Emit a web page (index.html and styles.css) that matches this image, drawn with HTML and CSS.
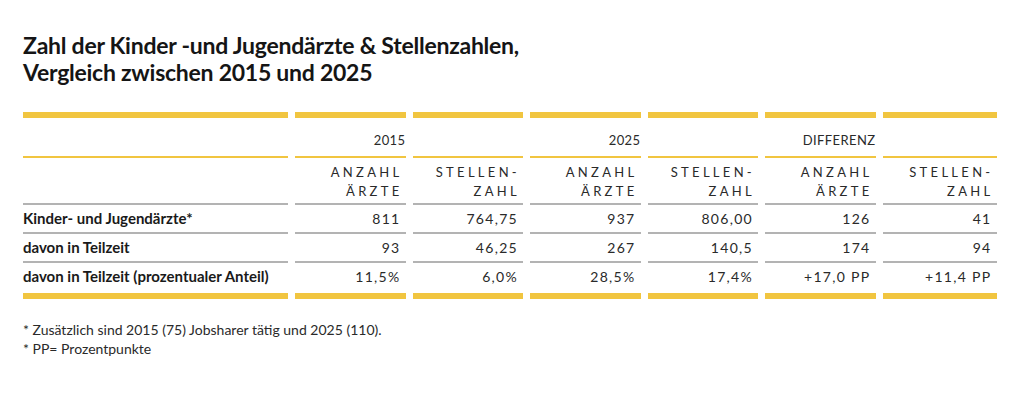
FILE: index.html
```html
<!DOCTYPE html>
<html lang="de">
<head>
<meta charset="utf-8">
<title>Zahl der Kinder- und Jugendärzte</title>
<link rel="stylesheet" href="styles.css">
</head>
<body>
<main class="page">
  <h1 class="title">Zahl der Kinder -und Jugendärzte &amp; Stellenzahlen,<br>Vergleich zwischen 2015 und 2025</h1>
  <div class="table">
    <div class="cell year"></div>
    <div class="cell year">2015</div>
    <div class="cell year"></div>
    <div class="cell year">2025</div>
    <div class="cell year"></div>
    <div class="cell year">DIFFERENZ</div>
    <div class="cell year"></div>

    <div class="cell head"></div>
    <div class="cell head">ANZAHL<br>ÄRZTE</div>
    <div class="cell head">STELLEN-<br>ZAHL</div>
    <div class="cell head">ANZAHL<br>ÄRZTE</div>
    <div class="cell head">STELLEN-<br>ZAHL</div>
    <div class="cell head">ANZAHL<br>ÄRZTE</div>
    <div class="cell head">STELLEN-<br>ZAHL</div>

    <div class="cell label">Kinder- und Jugendärzte*</div>
    <div class="cell num">811</div>
    <div class="cell num">764,75</div>
    <div class="cell num">937</div>
    <div class="cell num">806,00</div>
    <div class="cell num">126</div>
    <div class="cell num">41</div>

    <div class="cell label">davon in Teilzeit</div>
    <div class="cell num">93</div>
    <div class="cell num">46,25</div>
    <div class="cell num">267</div>
    <div class="cell num">140,5</div>
    <div class="cell num">174</div>
    <div class="cell num">94</div>

    <div class="cell label last">davon in Teilzeit (prozentualer Anteil)</div>
    <div class="cell num last">11,5%</div>
    <div class="cell num last">6,0%</div>
    <div class="cell num last">28,5%</div>
    <div class="cell num last">17,4%</div>
    <div class="cell num last">+17,0 PP</div>
    <div class="cell num last">+11,4 PP</div>
  </div>
  <div class="notes">
    <p class="note">* Zusätzlich sind 2015 (75) Jobsharer tätig und 2025 (110).</p>
    <p class="note">* PP= Prozentpunkte</p>
  </div>
</main>
</body>
</html>
```

FILE: styles.css
```css
html, body {
  margin: 0;
  padding: 0;
  background: #ffffff;
}

.page {
  padding: 32px 0 0 23px;
  font-family: Lato, "Liberation Sans", sans-serif;
  color: #2a2a2a;
}

.title {
  margin: 0;
  font-size: 23px;
  line-height: 27px;
  font-weight: 700;
  letter-spacing: -0.25px;
  color: #151515;
}

.table {
  margin-top: 26px;
  display: grid;
  grid-template-columns: 265px repeat(5, 110.5px) 114px;
  column-gap: 7px;
  width: 973.5px;
}

.cell {
  box-sizing: border-box;
}

.year {
  border-top: 6px solid #f1c540;
  border-bottom: 2px solid #f1c540;
  height: 46px;
  padding-top: 12.5px;
  font-size: 13px;
  line-height: 18px;
  letter-spacing: 0.4px;
  text-align: right;
}

.head {
  height: 47px;
  padding: 5px 3px 0 0;
  border-bottom: 2px solid #b3b3b3;
  font-size: 13px;
  line-height: 19px;
  letter-spacing: 3.3px;
  text-align: right;
}

.label,
.num {
  height: 29px;
  border-bottom: 2px solid #b3b3b3;
  line-height: 27px;
}

.label {
  font-size: 15px;
  font-weight: 700;
  color: #1a1a1a;
}

.num {
  font-size: 14px;
  letter-spacing: 1.3px;
  text-align: right;
  padding-right: 5px;
}

.last {
  height: 36px;
  border-bottom: 6px solid #f1c540;
}

.notes {
  margin-top: 21px;
}

.note {
  margin: 0;
  font-size: 14px;
  line-height: 19px;
  color: #2a2a2a;
}
```
